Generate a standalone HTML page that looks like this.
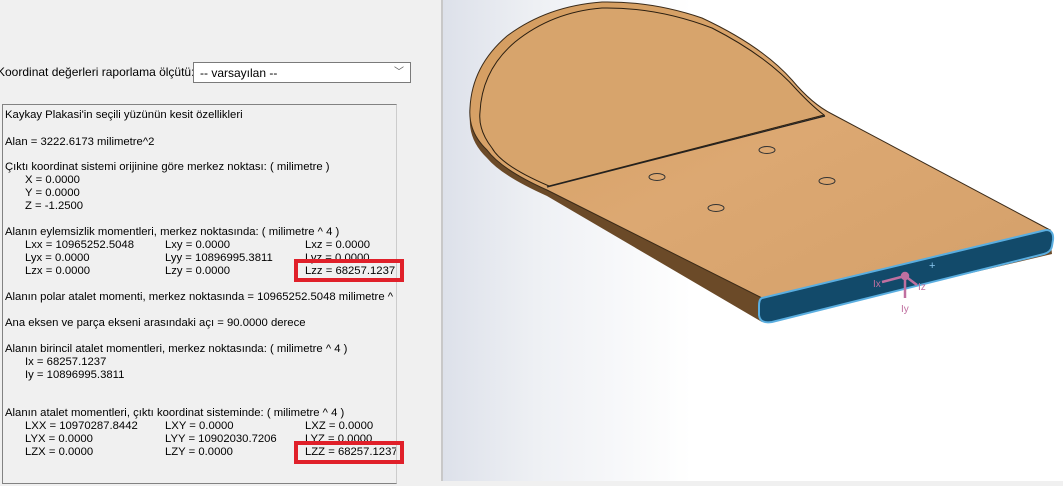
<!DOCTYPE html>
<html><head><meta charset="utf-8"><style>
body{margin:0;width:1063px;height:481px;overflow:hidden;background:#f0f0f0;font-family:"Liberation Sans",sans-serif;position:relative}
.lbl{position:absolute;left:-3px;top:65px;font-size:12px;color:#000}
.sel{position:absolute;left:193px;top:62px;width:218px;height:21px;background:#fff;border:1px solid #7a7a7a;font-size:12px;line-height:20px;padding-left:6px;box-sizing:border-box}
.sel span{position:absolute;right:6px;top:0;font-size:10px;color:#555}
.box{position:absolute;left:2px;top:104px;width:395px;height:380px;border:1px solid #828282;border-right-color:#ccc;box-sizing:border-box;font-size:11.3px;color:#000;background:#f0f0f0;overflow:hidden}
.t{position:absolute;white-space:nowrap}
.red{position:absolute;border:4px solid #e0202a;box-sizing:border-box}
.view{position:absolute;left:441px;top:0;width:622px;height:481px;background:linear-gradient(90deg,#dde1ea 0%,#eef0f4 15%,#fff 40%);border-left:2px solid #c8c8c8}
</style></head><body>
<div class="lbl">Koordinat değerleri raporlama ölçütü:</div>
<div class="sel">-- varsayılan --<span>﹀</span></div>
<div class="box">
<div class="t" style="left:2px;top:4px">Kaykay Plakasi'in seçili yüzünün kesit özellikleri</div>
<div class="t" style="left:2px;top:31px">Alan = 3222.6173 milimetre^2</div>
<div class="t" style="left:2px;top:56px">Çıktı koordinat sistemi orijinine göre merkez noktası: ( milimetre )</div>
<div class="t" style="left:22px;top:69px">X = 0.0000</div>
<div class="t" style="left:22px;top:82px">Y = 0.0000</div>
<div class="t" style="left:22px;top:95px">Z = -1.2500</div>
<div class="t" style="left:2px;top:121px">Alanın eylemsizlik momentleri, merkez noktasında: ( milimetre ^ 4 )</div>
<div class="t" style="left:22px;top:134px">Lxx = 10965252.5048</div><div class="t" style="left:162px;top:134px">Lxy = 0.0000</div><div class="t" style="left:302px;top:134px">Lxz = 0.0000</div>
<div class="t" style="left:22px;top:147px">Lyx = 0.0000</div><div class="t" style="left:162px;top:147px">Lyy = 10896995.3811</div><div class="t" style="left:302px;top:147px">Lyz = 0.0000</div>
<div class="t" style="left:22px;top:160px">Lzx = 0.0000</div><div class="t" style="left:162px;top:160px">Lzy = 0.0000</div><div class="t" style="left:302px;top:160px">Lzz = 68257.1237</div>
<div class="t" style="left:2px;top:186px">Alanın polar atalet momenti, merkez noktasında = 10965252.5048 milimetre ^ 4</div>
<div class="t" style="left:2px;top:212px">Ana eksen ve parça ekseni arasındaki açı = 90.0000 derece</div>
<div class="t" style="left:2px;top:238px">Alanın birincil atalet momentleri, merkez noktasında: ( milimetre ^ 4 )</div>
<div class="t" style="left:22px;top:251px">Ix = 68257.1237</div>
<div class="t" style="left:22px;top:264px">Iy = 10896995.3811</div>
<div class="t" style="left:2px;top:302px">Alanın atalet momentleri, çıktı koordinat sisteminde: ( milimetre ^ 4 )</div>
<div class="t" style="left:22px;top:315px">LXX = 10970287.8442</div><div class="t" style="left:162px;top:315px">LXY = 0.0000</div><div class="t" style="left:302px;top:315px">LXZ = 0.0000</div>
<div class="t" style="left:22px;top:328px">LYX = 0.0000</div><div class="t" style="left:162px;top:328px">LYY = 10902030.7206</div><div class="t" style="left:302px;top:328px">LYZ = 0.0000</div>
<div class="t" style="left:22px;top:341px">LZX = 0.0000</div><div class="t" style="left:162px;top:341px">LZY = 0.0000</div><div class="t" style="left:302px;top:341px">LZZ = 68257.1237</div>
</div>
<div class="red" style="left:294px;top:259px;width:110px;height:23px"></div>
<div class="red" style="left:294px;top:441px;width:110px;height:23px"></div>
<div class="view">
<svg width="622" height="481" viewBox="441 0 622 481" xmlns="http://www.w3.org/2000/svg">
<defs><linearGradient id="w" x1="0" y1="0" x2="1" y2="1"><stop offset="0" stop-color="#d39c5e"/><stop offset=".5" stop-color="#dca872"/><stop offset="1" stop-color="#d4a06a"/></linearGradient></defs>
<path d="M468,116 Q470,72 505,42 Q545,10 600,6 Q650,5 700,22 Q760,50 790,85 Q810,108 830,118 L1048,236 L1050,254 L760,322 L545,196 Q500,176 485,158 Q466,140 468,116 Z" fill="#6b4a28"/>
<path d="M468,108 Q470,66 505,36 Q545,6 600,2 Q650,1 700,18 Q760,46 790,80 Q810,104 830,114 L1048,230 L760,298 L545,190 Q500,170 485,150 Q466,132 468,108 Z" fill="url(#w)" stroke="#3a2a18" stroke-width="1"/>
<path d="M478,112 Q480,70 513,42 Q550,12 600,8 Q655,7 710,28 Q765,56 795,90 Q810,106 822,115 L547,186 Q500,166 490,148 Q476,130 478,112 Z" fill="#d7a46c" stroke="#2a1e10" stroke-width="1"/>
<line x1="545" y1="187" x2="823" y2="116" stroke="#222" stroke-width="1.2"/>
<g fill="none" stroke="#333"><ellipse cx="765" cy="150" rx="8" ry="3.5"/><ellipse cx="655" cy="177" rx="8" ry="3.5"/><ellipse cx="825" cy="181" rx="8" ry="3.5"/><ellipse cx="714" cy="208" rx="8" ry="3.5"/></g>
<path d="M760,298 L1044,230 Q1052,230 1051,240 L1050,246 Q1049,252 1042,254 L770,322 Q758,324 757,315 L757,306 Q757,299 760,298 Z" fill="#124a6a" stroke="#5aaee0" stroke-width="2"/>
<g stroke="#c070a0" stroke-width="2.5" fill="#c070a0"><line x1="903" y1="276" x2="880" y2="282"/><line x1="903" y1="276" x2="903" y2="298"/><line x1="903" y1="276" x2="915" y2="285"/><circle cx="903" cy="276" r="3"/></g>
<g fill="#c070a0" font-size="10"><text x="871" y="287">Ix</text><text x="916" y="290">Iz</text><text x="899" y="312">Iy</text></g>
<text x="927" y="269" fill="#8ac8f0" font-size="11">+</text>
</svg></div>
</body></html>
